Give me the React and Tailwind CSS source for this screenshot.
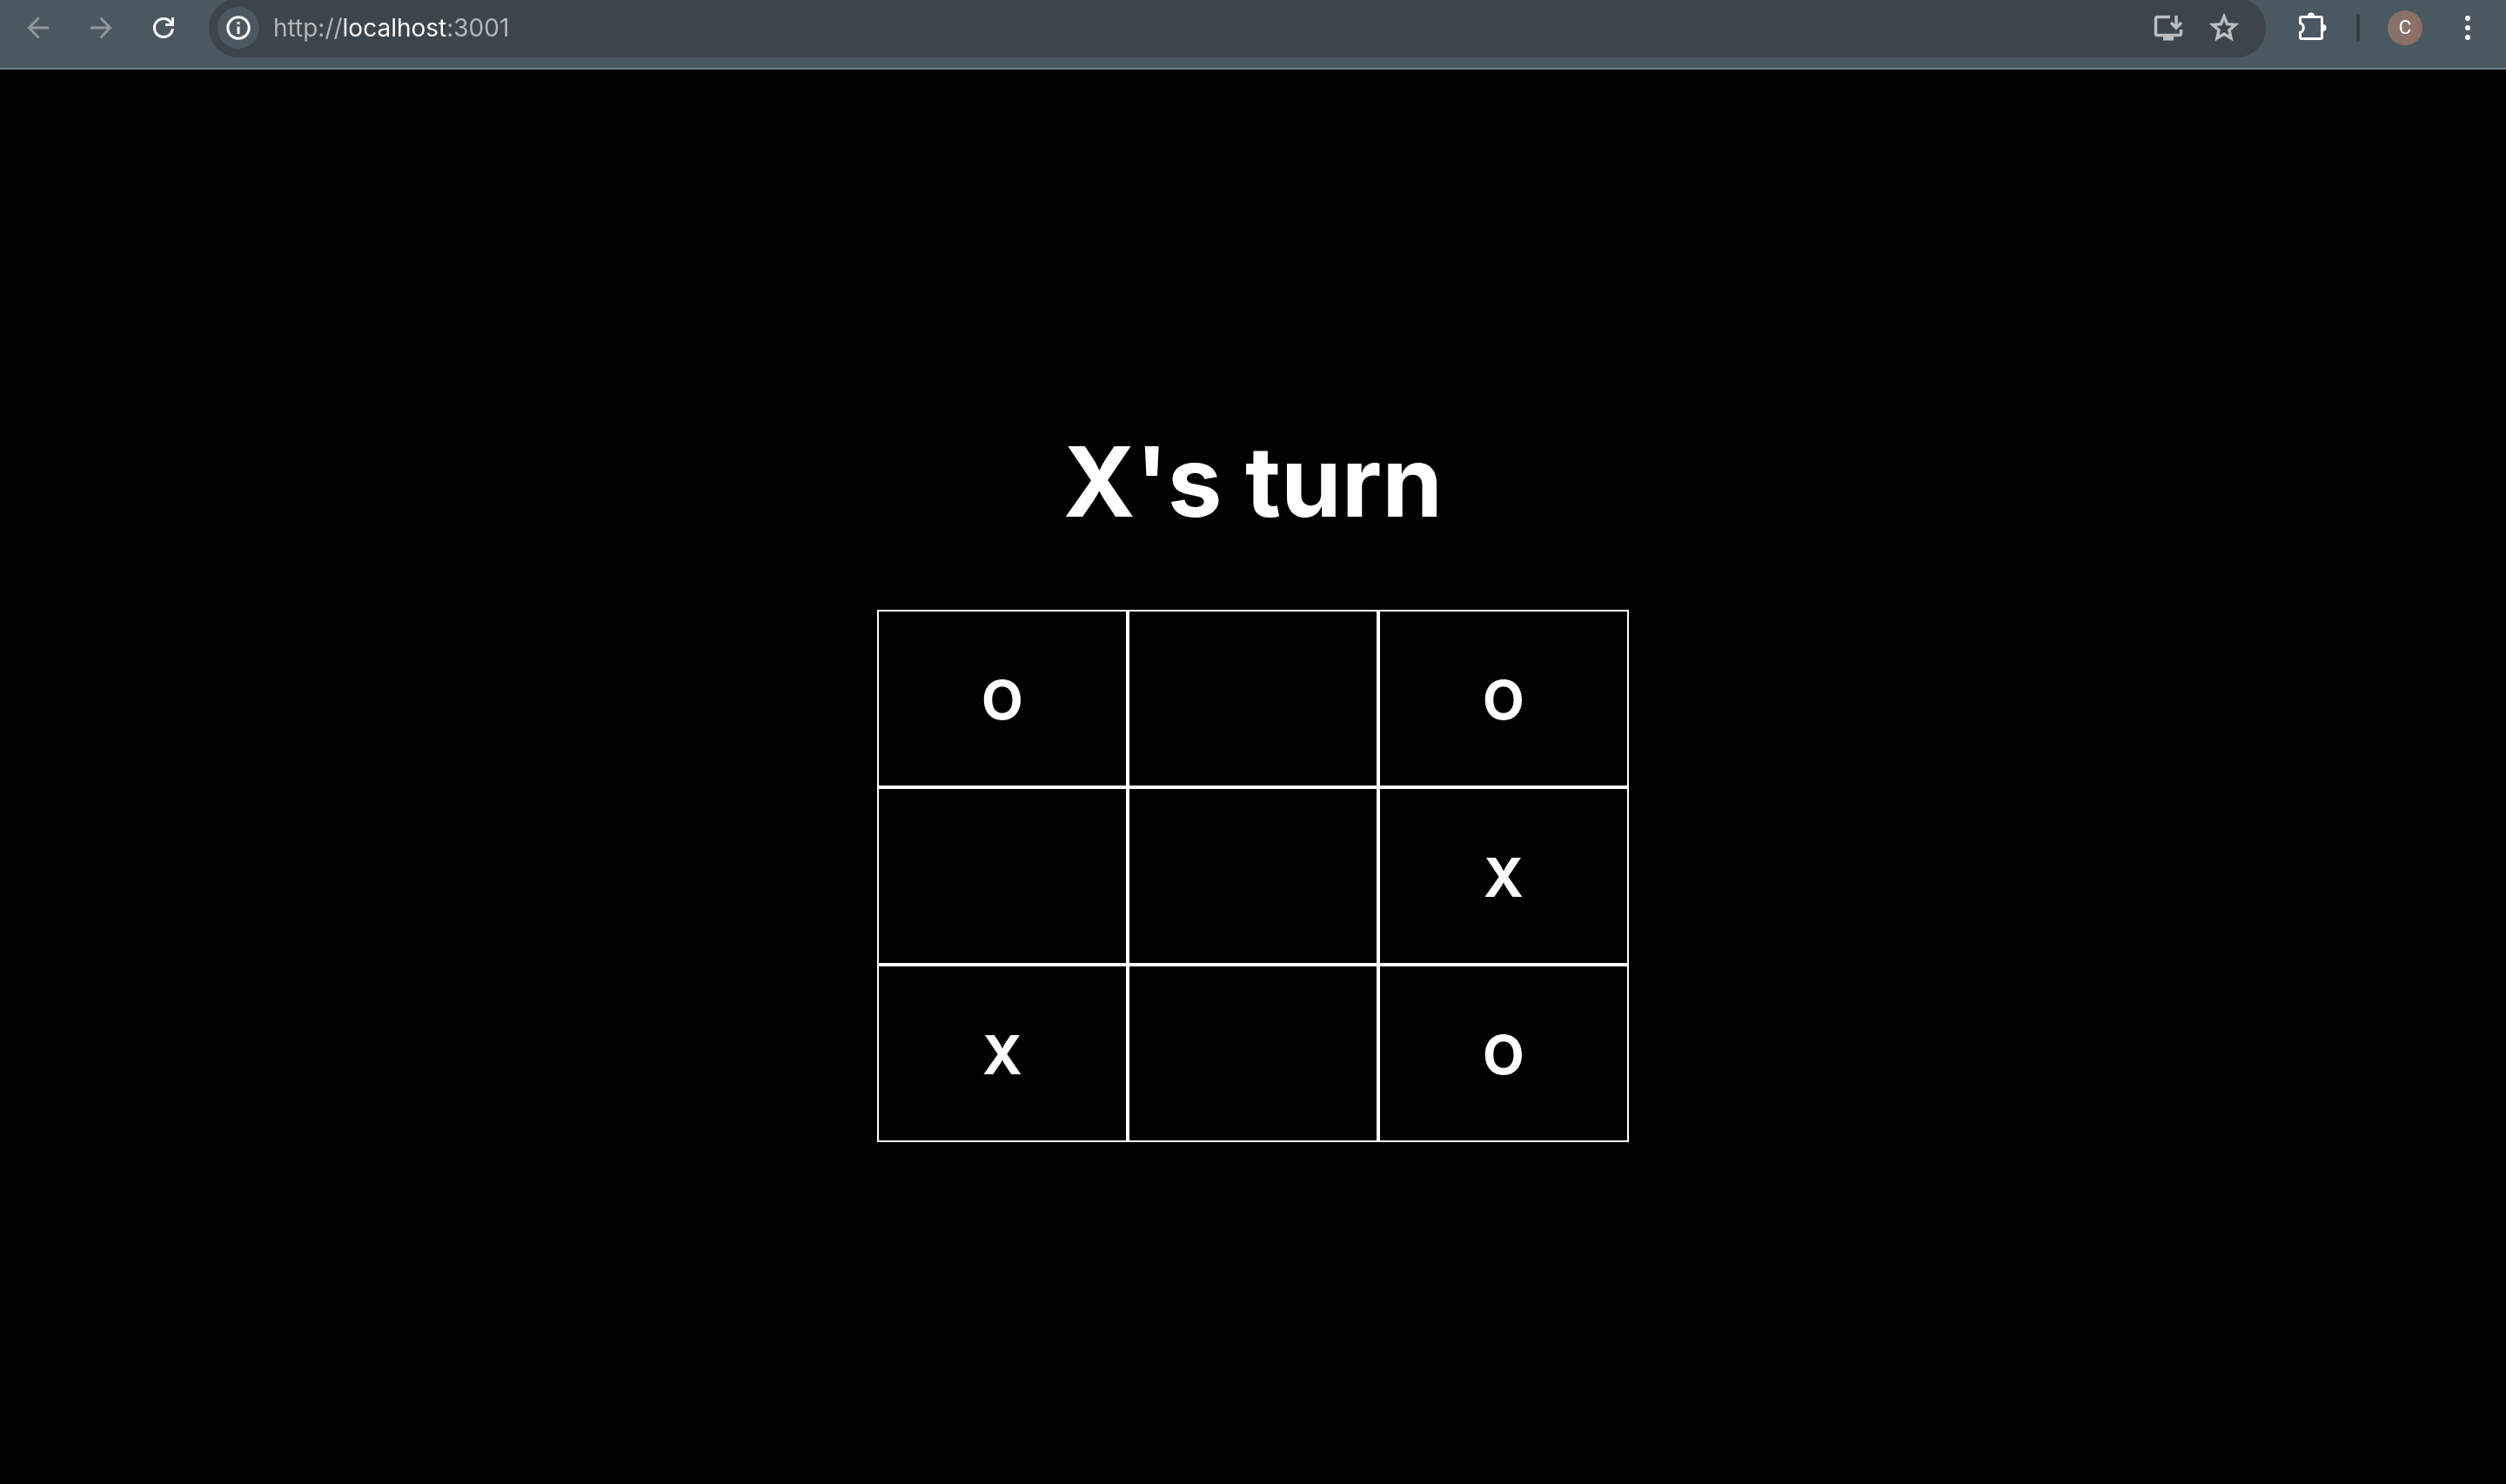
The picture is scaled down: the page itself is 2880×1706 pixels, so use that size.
import { useState } from "react";

function BackIcon() {
  return (
    <svg viewBox="0 0 36 36" className="size-9" fill="none" stroke="currentColor" strokeWidth="3">
      <path d="M30 18H8M18.5 6.5 7.5 18l11 11.5" />
    </svg>
  );
}

function ForwardIcon() {
  return (
    <svg viewBox="0 0 36 36" className="size-9" fill="none" stroke="currentColor" strokeWidth="3">
      <path d="M6 18h22M17.500 6.500 28.500 18l-11 11.500" />
    </svg>
  );
}

function ReloadIcon() {
  return (
    <svg viewBox="0 0 36 36" className="size-9" fill="none" stroke="currentColor" strokeWidth="3">
      <path d="M28.400 19.200A10.500 10.500 0 1 1 26.500 11.800L28.500 14.500" />
      <path d="M28.500 6v8.500H20" />
    </svg>
  );
}

function InfoIcon() {
  return (
    <svg viewBox="0 0 28 28" className="size-7" fill="none" stroke="currentColor" strokeWidth="3">
      <circle cx="14" cy="14" r="12.200" />
      <path d="M14 12.500v8.500M14 7v3" />
    </svg>
  );
}

function InstallIcon() {
  return (
    <svg viewBox="0 0 36 36" className="size-9" fill="none" stroke="currentColor" strokeWidth="3.500">
      <path d="M20 5.500H5.500a2 2 0 0 0-2 2v17a2 2 0 0 0 2 2h25a2 2 0 0 0 2-2V20" />
      <path d="M12 29.500h12" strokeWidth="6" />
      <path d="M27 4v13M21 12l6 6 6-6" />
    </svg>
  );
}

function StarIcon() {
  return (
    <svg viewBox="0 0 36 36" className="size-9" fill="none" stroke="currentColor" strokeWidth="3.500">
      <path d="M18 5l3.600 8.700 9.400.8-7.100 6.200 2.100 9.200-8-4.900-8 4.900 2.100-9.200L5 14.500l9.400-.8z" />
    </svg>
  );
}

function PuzzleIcon() {
  return (
    <svg viewBox="0 0 36 36" className="size-9">
      <path
        d="M5 5.500h22a1.500 1.500 0 0 1 1.500 1.500v22a1.500 1.500 0 0 1-1.500 1.500H5a1.500 1.500 0 0 1-1.500-1.500v-5.700a5.600 5.600 0 0 0 0-10.600V7A1.500 1.500 0 0 1 5 5.500z"
        fill="none"
        stroke="currentColor"
        strokeWidth="3"
      />
      <path d="M12 4.500a4 4 0 0 1 8 0zM29.500 14a4 4 0 0 1 0 8z" fill="currentColor" />
    </svg>
  );
}

function MenuIcon() {
  return (
    <svg viewBox="0 0 36 36" className="size-9" fill="currentColor">
      <circle cx="18" cy="7" r="3" />
      <circle cx="18" cy="18" r="3" />
      <circle cx="18" cy="29" r="3" />
    </svg>
  );
}

function BrowserBar() {
  return (
    <header className="flex h-20 shrink-0 items-center overflow-hidden border-b-2 border-[#707d84] bg-[#4a5860] pr-[26px] pb-3.5 pl-[26px] text-white">
      <nav className="flex gap-9" aria-label="History">
        <button aria-label="Back" className="text-[#8f989d]"><BackIcon /></button>
        <button aria-label="Forward" className="text-[#8f989d]"><ForwardIcon /></button>
        <button aria-label="Reload"><ReloadIcon /></button>
      </nav>
      <form
        className="ml-[34px] flex h-[68px] flex-1 items-center rounded-full bg-[#3d454c] pr-[30px] pl-2.5"
        onSubmit={(e) => e.preventDefault()}
      >
        <button
          type="button"
          aria-label="Site information"
          className="flex size-12 items-center justify-center rounded-full bg-[#4a5860]"
        >
          <InfoIcon />
        </button>
        <input
          aria-label="Address"
          type="text"
          defaultValue="http://localhost:3001"
          className="ml-4 min-w-0 flex-1 bg-[linear-gradient(90deg,#b5b8ba_79px,#ffffff_79px,#ffffff_199px,#b5b8ba_199px)] bg-clip-text font-['Inter',sans-serif] text-[28px] leading-9 text-transparent outline-none"
        />
        <div className="flex gap-7 text-[#bdbdbd]">
          <button type="button" aria-label="Install app"><InstallIcon /></button>
          <button type="button" aria-label="Bookmark this page"><StarIcon /></button>
        </div>
      </form>
      <button aria-label="Extensions" className="ml-9"><PuzzleIcon /></button>
      <span className="ml-8 h-8 w-1 rounded-full bg-[#343e45]" />
      <button
        aria-label="Profile C"
        className="ml-8 size-10 rounded-full bg-[#8a7067] font-['Roboto',sans-serif] text-[22px] leading-10 font-normal"
      >
        C
      </button>
      <button aria-label="Menu" className="ml-[34px]"><MenuIcon /></button>
    </header>
  );
}

const initialBoard = ["O", "", "O", "", "", "X", "X", "", "O"];

export default function App() {
  const [board, setBoard] = useState(initialBoard);
  const [player, setPlayer] = useState("X");

  const play = (index) => {
    if (board[index]) return;
    setBoard(board.map((mark, i) => (i === index ? player : mark)));
    setPlayer(player === "X" ? "O" : "X");
  };

  return (
    <div className="flex min-h-screen flex-col bg-black font-['Inter',sans-serif] text-white">
      <BrowserBar />
      <main className="flex flex-1 flex-col items-center justify-center">
        <h1 className="mb-[68px] text-[112px] leading-[160px] font-bold">{player}'s turn</h1>
        <div className="grid w-[30%] grid-cols-3">
          {board.map((mark, index) => (
            <button
              key={index}
              aria-label={`Cell ${index + 1} ${mark}`}
              onClick={() => play(index)}
              className="min-h-[204px] border-2 border-white pt-1 text-[62px] leading-none font-bold"
            >
              {mark}
            </button>
          ))}
        </div>
      </main>
    </div>
  );
}
